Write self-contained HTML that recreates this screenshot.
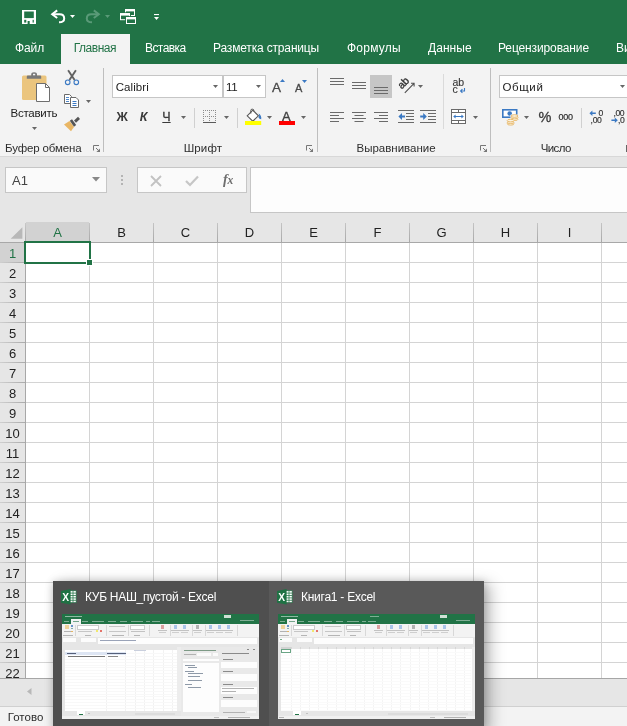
<!DOCTYPE html>
<html><head><meta charset="utf-8">
<style>
*{box-sizing:border-box;margin:0;padding:0}
html,body{width:627px;height:726px;overflow:hidden;background:#fff;font-family:"Liberation Sans",sans-serif;}
.abs{position:absolute}
#root{will-change:transform;position:relative;width:627px;height:726px;overflow:hidden;background:#fff}
#title{left:0;top:0;width:627px;height:64px;background:#217346}
.tab{position:absolute;top:33px;height:31px;line-height:31px;color:#fff;font-size:12.5px;white-space:nowrap}
#ribbon{left:0;top:64px;width:627px;height:92px;background:#f3f3f3}
.glabel{position:absolute;top:141px;font-size:12px;color:#444;white-space:nowrap;letter-spacing:0.3px}
.sep{position:absolute;top:68px;width:1px;height:84px;background:#bebebe}
#fbar{left:0;top:156px;width:627px;height:66px;background:#e6e6e6}
.t{position:absolute;white-space:nowrap;color:#333}
.ch{text-align:center;font-size:13px;line-height:20px}
.rh{text-align:center;font-size:13px;line-height:21px}
</style></head><body><div id="root">
<div id="title" class="abs"></div>
<!-- SECTION: title -->
<div class="abs" style="left:61px;top:34px;width:69px;height:30px;background:#f3f3f3"></div>
<div class="t" style="left:14.70px;top:42px;font-size:12px;line-height:12px;color:#fff;letter-spacing:-0.101px;will-change:transform;">Файл</div>
<div class="t" style="left:73.70px;top:42px;font-size:12px;line-height:12px;color:#217346;letter-spacing:-0.479px;">Главная</div>
<div class="t" style="left:144.70px;top:42px;font-size:12px;line-height:12px;color:#fff;letter-spacing:-0.567px;will-change:transform;">Вставка</div>
<div class="t" style="left:213.40px;top:42px;font-size:12px;line-height:12px;color:#fff;letter-spacing:-0.166px;will-change:transform;">Разметка страницы</div>
<div class="t" style="left:347.40px;top:42px;font-size:12px;line-height:12px;color:#fff;letter-spacing:0.230px;will-change:transform;">Формулы</div>
<div class="t" style="left:427.70px;top:42px;font-size:12px;line-height:12px;color:#fff;letter-spacing:0.049px;will-change:transform;">Данные</div>
<div class="t" style="left:498.40px;top:42px;font-size:12px;line-height:12px;color:#fff;letter-spacing:-0.120px;will-change:transform;">Рецензирование</div>
<div class="t" style="left:616.30px;top:42px;font-size:12px;line-height:12px;color:#fff;letter-spacing:0.000px;will-change:transform;">Ви</div>
<svg class="abs" style="left:22px;top:10px" width="14" height="14" viewBox="0 0 14 14">
<rect x="0" y="0" width="14" height="14" fill="#fff"/>
<rect x="2.2" y="1.5" width="9.6" height="6.6" fill="#217346"/>
<rect x="2.2" y="9.8" width="2.1" height="2.8" fill="#217346"/>
<rect x="5.6" y="11" width="2.1" height="3" fill="#217346"/>
<rect x="10.6" y="9.8" width="1.2" height="2.8" fill="#217346"/></svg>
<svg class="abs" style="left:50px;top:9px" width="16" height="16" viewBox="0 0 16 16"><g fill="none" stroke="#fff" stroke-width="2">
<path d="M7.2 1.4L2.2 5.2L7.2 9"/><path d="M2.6 5.2H9.6Q14.2 5.2 14.2 9.4Q14.2 13.2 9 13.3"/></g></svg>
<svg class="abs" style="left:70px;top:15px" width="5" height="3"><path d="M0 0H5L2.5 3Z" fill="#fff"/></svg>
<svg class="abs" style="left:85px;top:9px" width="16" height="16" viewBox="0 0 16 16"><g transform="translate(16,0) scale(-1,1)" fill="none" stroke="#5a9a78" stroke-width="2">
<path d="M7.2 1.4L2.2 5.2L7.2 9"/><path d="M2.6 5.2H9.6Q14.2 5.2 14.2 9.4Q14.2 13.2 9 13.3"/></g></svg>
<svg class="abs" style="left:105px;top:15px" width="5" height="3"><path d="M0 0H5L2.5 3Z" fill="#5a9a78"/></svg>
<svg class="abs" style="left:119px;top:8px" width="19" height="18" viewBox="0 0 19 18"><rect x="5.1" y="0.09999999999999998" width="11.8" height="8.8" fill="#217346"/><rect x="6.5" y="1.5" width="9" height="6" fill="#217346" stroke="#fff" stroke-width="1"/><rect x="6" y="1" width="10" height="2.4" fill="#fff"/><rect x="0.09999999999999998" y="4.3" width="11.8" height="8.8" fill="#217346"/><rect x="1.5" y="5.7" width="9" height="6" fill="#217346" stroke="#fff" stroke-width="1"/><rect x="1" y="5.2" width="10" height="2.4" fill="#fff"/><rect x="6.1" y="8.1" width="11.8" height="8.8" fill="#217346"/><rect x="7.5" y="9.5" width="9" height="6" fill="#217346" stroke="#fff" stroke-width="1"/><rect x="7" y="9" width="10" height="2.4" fill="#fff"/></svg>
<svg class="abs" style="left:154px;top:14px" width="5" height="7"><rect x="0" y="0" width="5" height="1.1" fill="#fff"/><path d="M0 3H5L2.5 6Z" fill="#fff"/></svg>
<div id="ribbon" class="abs"></div>
<div class="sep" style="left:103px"></div>
<div class="sep" style="left:317px"></div>
<div class="sep" style="left:490px"></div>
<div id="fbar" class="abs"></div>
<div class="abs" style="left:0;top:156px;width:627px;height:1px;background:#d8d8d8"></div>
<!-- SECTION: ribbon -->
<div class="t" style="left:5.10px;top:143px;font-size:11.5px;line-height:11.5px;color:#2e2e2e;letter-spacing:-0.149px;">Буфер обмена</div>
<div class="t" style="left:183.70px;top:143px;font-size:11.5px;line-height:11.5px;color:#2e2e2e;letter-spacing:0.116px;">Шрифт</div>
<div class="t" style="left:356.50px;top:143px;font-size:11.5px;line-height:11.5px;color:#2e2e2e;letter-spacing:-0.005px;">Выравнивание</div>
<div class="t" style="left:540.70px;top:143px;font-size:11.5px;line-height:11.5px;color:#2e2e2e;letter-spacing:-0.618px;">Число</div>
<svg class="abs" style="left:93px;top:145px" width="8" height="8" viewBox="0 0 8 8"><path d="M0.5 5.5V0.5H6" fill="none" stroke="#777" stroke-width="1"/><path d="M3 3L5.5 5.5" fill="none" stroke="#777" stroke-width="1"/><path d="M7 3.4V7H3.4Z" fill="#777"/></svg>
<svg class="abs" style="left:306px;top:145px" width="8" height="8" viewBox="0 0 8 8"><path d="M0.5 5.5V0.5H6" fill="none" stroke="#777" stroke-width="1"/><path d="M3 3L5.5 5.5" fill="none" stroke="#777" stroke-width="1"/><path d="M7 3.4V7H3.4Z" fill="#777"/></svg>
<svg class="abs" style="left:480px;top:145px" width="8" height="8" viewBox="0 0 8 8"><path d="M0.5 5.5V0.5H6" fill="none" stroke="#777" stroke-width="1"/><path d="M3 3L5.5 5.5" fill="none" stroke="#777" stroke-width="1"/><path d="M7 3.4V7H3.4Z" fill="#777"/></svg>
<svg class="abs" style="left:21px;top:71px" width="30" height="32" viewBox="0 0 30 32">
<rect x="1" y="4.5" width="24.5" height="24.5" rx="1.5" fill="#ebc57e"/>
<path d="M5.8 7.8V5.6Q5.8 4.6 6.8 4.6H10.2V3.4Q10.2 1.3 13.1 1.3Q16 1.3 16 3.4V4.6H19.2Q20.2 4.6 20.2 5.6V7.8Z" fill="#787878"/>
<rect x="12" y="2.8" width="2.2" height="1.5" fill="#f3f3f3"/>
<path d="M15.5 12.5H24.5L28.5 16.5V30.5H15.5Z" fill="#fff" stroke="#6e6e6e" stroke-width="1"/>
<path d="M24.5 12.5V16.5H28.5" fill="none" stroke="#6e6e6e" stroke-width="1"/></svg>
<div class="t" style="left:10.50px;top:108px;font-size:11.5px;line-height:11.5px;color:#222;letter-spacing:-0.249px;">Вставить</div>
<svg class="abs" style="left:32px;top:127px" width="5" height="3"><path d="M0 0H5L2.5 3Z" fill="#666"/></svg>
<svg class="abs" style="left:64px;top:69px" width="16" height="17" viewBox="0 0 16 17">
<path d="M4.1 1.3L10.6 11M11.9 1.3L5.4 11" stroke="#626262" stroke-width="1.9" fill="none"/>
<circle cx="3.7" cy="13.3" r="2.3" fill="#f3f3f3" stroke="#3b79c3" stroke-width="1.1"/>
<circle cx="12.3" cy="13.3" r="2.3" fill="#f3f3f3" stroke="#3b79c3" stroke-width="1.1"/></svg>
<svg class="abs" style="left:63px;top:93px" width="17" height="16" viewBox="0 0 17 16">
<path d="M1.5 1.5H6.5L8.5 3.5V10.5H1.5Z" fill="#fff" stroke="#6a6a6a"/>
<path d="M3 4.5H6M3 6.5H6M3 8.5H6" stroke="#3b79c3" stroke-width="0.9"/>
<path d="M7.5 4.5H13L15.5 7V14.5H7.5Z" fill="#fff" stroke="#6a6a6a"/>
<path d="M9.5 8.5H13.5M9.5 10.5H13.5M9.5 12.5H13.5" stroke="#3b79c3" stroke-width="1"/></svg>
<svg class="abs" style="left:86px;top:100px" width="5" height="3"><path d="M0 0H5L2.5 3Z" fill="#666"/></svg>
<svg class="abs" style="left:63px;top:116px" width="18" height="16" viewBox="0 0 18 16">
<path d="M1 8.5L6.5 5L11 11L8 15.2Z" fill="#e9b664"/>
<path d="M6.8 4.8L9 3.2L13.2 9L11 10.8Z" fill="#555"/>
<path d="M11 4.5L15 0.8L17 3L13 6.8Z" fill="#555"/></svg>
<div class="abs" style="left:112px;top:75px;width:111px;height:23px;background:#fff;border:1px solid #c6c6c6"></div>
<div class="abs" style="left:223px;top:75px;width:43px;height:23px;background:#fff;border:1px solid #c6c6c6"></div>
<div class="t" style="left:115.70px;top:82px;font-size:11.5px;line-height:11.5px;color:#222;letter-spacing:0.068px;">Calibri</div>
<div class="t" style="left:226.00px;top:82px;font-size:11.5px;line-height:11.5px;color:#222;letter-spacing:-0.338px;">11</div>
<svg class="abs" style="left:213px;top:85px" width="5" height="3"><path d="M0 0H5L2.5 3Z" fill="#666"/></svg>
<svg class="abs" style="left:256px;top:85px" width="5" height="3"><path d="M0 0H5L2.5 3Z" fill="#666"/></svg>
<div class="t" style="left:272.00px;top:81px;font-size:13.5px;line-height:13.5px;color:#484848;letter-spacing:0.000px;-webkit-text-stroke:0.3px #484848;">A</div>
<svg class="abs" style="left:280px;top:79px" width="5" height="3"><path d="M0 3H5L2.5 0Z" fill="#3b79c3"/></svg>
<div class="t" style="left:295.00px;top:83px;font-size:11px;line-height:11px;color:#484848;letter-spacing:0.000px;-webkit-text-stroke:0.3px #484848;">A</div>
<svg class="abs" style="left:302px;top:79.5px" width="5" height="3"><path d="M0 0H5L2.5 3Z" fill="#3b79c3"/></svg>
<div class="t" style="left:116.60px;top:111px;font-size:12.5px;line-height:12.5px;color:#3a3a3a;letter-spacing:0.000px;font-weight:bold;">Ж</div>
<div class="t" style="left:139.80px;top:111px;font-size:12.5px;line-height:12.5px;color:#3a3a3a;letter-spacing:0.000px;font-weight:bold;font-style:italic;">К</div>
<div class="t" style="left:162.30px;top:111px;font-size:12.5px;line-height:12.5px;color:#3a3a3a;letter-spacing:0.000px;text-decoration:underline;text-underline-offset:1px;-webkit-text-stroke:0.3px #3a3a3a;">Ч</div>
<svg class="abs" style="left:181px;top:116px" width="5" height="3"><path d="M0 0H5L2.5 3Z" fill="#666"/></svg>
<div class="abs" style="left:194px;top:108px;width:1px;height:20px;background:#d0d0d0"></div>
<svg class="abs" style="left:203px;top:110px" width="14" height="14" viewBox="0 0 14 14" shape-rendering="crispEdges">
<g fill="#8c8c8c"><rect x="0" y="0" width="1" height="1"/><rect x="0" y="6" width="1" height="1"/><rect x="0" y="0" width="1" height="1"/><rect x="6" y="0" width="1" height="1"/><rect x="12" y="0" width="1" height="1"/><rect x="2" y="0" width="1" height="1"/><rect x="2" y="6" width="1" height="1"/><rect x="0" y="2" width="1" height="1"/><rect x="6" y="2" width="1" height="1"/><rect x="12" y="2" width="1" height="1"/><rect x="4" y="0" width="1" height="1"/><rect x="4" y="6" width="1" height="1"/><rect x="0" y="4" width="1" height="1"/><rect x="6" y="4" width="1" height="1"/><rect x="12" y="4" width="1" height="1"/><rect x="6" y="0" width="1" height="1"/><rect x="6" y="6" width="1" height="1"/><rect x="0" y="6" width="1" height="1"/><rect x="6" y="6" width="1" height="1"/><rect x="12" y="6" width="1" height="1"/><rect x="8" y="0" width="1" height="1"/><rect x="8" y="6" width="1" height="1"/><rect x="0" y="8" width="1" height="1"/><rect x="6" y="8" width="1" height="1"/><rect x="12" y="8" width="1" height="1"/><rect x="10" y="0" width="1" height="1"/><rect x="10" y="6" width="1" height="1"/><rect x="0" y="10" width="1" height="1"/><rect x="6" y="10" width="1" height="1"/><rect x="12" y="10" width="1" height="1"/><rect x="12" y="0" width="1" height="1"/><rect x="12" y="6" width="1" height="1"/><rect x="0" y="12" width="1" height="1"/><rect x="6" y="12" width="1" height="1"/><rect x="12" y="12" width="1" height="1"/></g><rect x="0" y="12" width="13" height="1" fill="#5a5a5a"/></svg>
<svg class="abs" style="left:224px;top:116px" width="5" height="3"><path d="M0 0H5L2.5 3Z" fill="#666"/></svg>
<div class="abs" style="left:237px;top:108px;width:1px;height:20px;background:#d0d0d0"></div>
<svg class="abs" style="left:245px;top:108px" width="18" height="18" viewBox="0 0 18 18">
<path d="M2.2 7.8L7.8 2.2L13.4 7.8L7.8 13.2Z" fill="#fff" stroke="#555" stroke-width="1.1"/>
<path d="M5.8 5.6V2.4Q5.8 1.2 7 1.2H7.6Q8.8 1.2 8.8 2.4V3.4" fill="none" stroke="#555" stroke-width="1"/>
<path d="M13.6 5.6Q16.8 7.6 16.2 11.2Q14.2 11.2 13.4 9.2L14.2 7.6Z" fill="#3b79c3"/>
<rect x="0" y="13" width="16.2" height="4" fill="#ffff00"/></svg>
<svg class="abs" style="left:267px;top:116px" width="5" height="3"><path d="M0 0H5L2.5 3Z" fill="#666"/></svg>
<div class="t" style="left:282.00px;top:110px;font-size:13px;line-height:13px;color:#404040;letter-spacing:0.000px;-webkit-text-stroke:0.35px #404040;">A</div>
<div class="abs" style="left:279px;top:121px;width:16px;height:4px;background:#f00"></div>
<svg class="abs" style="left:301px;top:116px" width="5" height="3"><path d="M0 0H5L2.5 3Z" fill="#666"/></svg>
<div class="abs" style="left:370px;top:75px;width:22px;height:23px;background:#c6c6c6"></div>
<svg class="abs" style="left:330px;top:78px" width="16" height="9"><rect x="0" y="0" width="14" height="1" fill="#6a6a6a"/><rect x="0" y="3" width="14" height="1" fill="#6a6a6a"/><rect x="0" y="6" width="14" height="1" fill="#6a6a6a"/></svg>
<svg class="abs" style="left:352px;top:82px" width="16" height="9"><rect x="0" y="0" width="14" height="1" fill="#6a6a6a"/><rect x="0" y="3" width="14" height="1" fill="#6a6a6a"/><rect x="0" y="6" width="14" height="1" fill="#6a6a6a"/></svg>
<svg class="abs" style="left:374px;top:87px" width="16" height="9"><rect x="0" y="0" width="14" height="1" fill="#6a6a6a"/><rect x="0" y="3" width="14" height="1" fill="#6a6a6a"/><rect x="0" y="6" width="14" height="1" fill="#6a6a6a"/></svg>
<svg class="abs" style="left:330px;top:112px" width="16" height="12"><rect x="0" y="0" width="14" height="1" fill="#6a6a6a"/><rect x="0" y="3" width="9" height="1" fill="#6a6a6a"/><rect x="0" y="6" width="14" height="1" fill="#6a6a6a"/><rect x="0" y="9" width="9" height="1" fill="#6a6a6a"/></svg>
<svg class="abs" style="left:352px;top:112px" width="16" height="12"><rect x="0" y="0" width="14" height="1" fill="#6a6a6a"/><rect x="2.5" y="3" width="9" height="1" fill="#6a6a6a"/><rect x="0" y="6" width="14" height="1" fill="#6a6a6a"/><rect x="2.5" y="9" width="9" height="1" fill="#6a6a6a"/></svg>
<svg class="abs" style="left:374px;top:112px" width="16" height="12"><rect x="0" y="0" width="14" height="1" fill="#6a6a6a"/><rect x="5" y="3" width="9" height="1" fill="#6a6a6a"/><rect x="0" y="6" width="14" height="1" fill="#6a6a6a"/><rect x="5" y="9" width="9" height="1" fill="#6a6a6a"/></svg>
<svg class="abs" style="left:397px;top:76px" width="19" height="19" viewBox="0 0 19 19">
<text x="0" y="0" transform="translate(4.7,13.6) rotate(-45)" font-family="Liberation Sans, sans-serif" font-size="10.5" fill="#333" stroke="#333" stroke-width="0.35">ab</text>
<path d="M7.8 16.8L16.8 7.6M14 7.3H17.1V10.4" fill="none" stroke="#505050" stroke-width="1.1"/></svg>
<svg class="abs" style="left:418px;top:85px" width="5" height="3"><path d="M0 0H5L2.5 3Z" fill="#666"/></svg>
<svg class="abs" style="left:398px;top:110px" width="17" height="13" viewBox="0 0 17 13">
<path d="M0 0.5H16M8 3.5H16M8 6.5H16M8 9.5H16M0 12.5H16" stroke="#6a6a6a" stroke-width="1"/>
<path d="M0.4 6.5L4 3V5.6H7V7.4H4V10Z" fill="#3b79c3"/></svg>
<svg class="abs" style="left:420px;top:110px" width="17" height="13" viewBox="0 0 17 13">
<path d="M0 0.5H16M8 3.5H16M8 6.5H16M8 9.5H16M0 12.5H16" stroke="#6a6a6a" stroke-width="1"/>
<path d="M6.8 6.5L3.2 3V5.6H0.2V7.4H3.2V10Z" fill="#3b79c3"/></svg>
<div class="abs" style="left:443px;top:74px;width:1px;height:55px;background:#dadada"></div>
<svg class="abs" style="left:452px;top:76px" width="15" height="19" viewBox="0 0 15 19">
<text x="0.4" y="10" font-family="Liberation Sans, sans-serif" font-size="10.5" fill="#3a3a3a" stroke="#3a3a3a" stroke-width="0.15">ab</text>
<text x="0.6" y="17" font-family="Liberation Sans, sans-serif" font-size="10.5" fill="#3a3a3a" stroke="#3a3a3a" stroke-width="0.15">c</text>
<path d="M12.5 12V15H8.6M10.4 13.2L8.6 15L10.4 16.8" fill="none" stroke="#3b79c3" stroke-width="1.1"/></svg>
<svg class="abs" style="left:451px;top:109px" width="16" height="16" viewBox="0 0 16 16">
<rect x="0.5" y="0.5" width="14" height="14" fill="#fff" stroke="#6a6a6a" stroke-width="1"/>
<path d="M0.5 3.5H14.5M0.5 11.5H14.5M7.5 0.5V3.5M7.5 11.5V14.5" stroke="#6a6a6a" stroke-width="1" fill="none"/>
<path d="M3 7.5H12" stroke="#3b79c3" stroke-width="1"/><path d="M2.2 7.5L4.6 5.6V9.4ZM12.8 7.5L10.4 5.6V9.4Z" fill="#3b79c3"/></svg>
<svg class="abs" style="left:473px;top:116px" width="5" height="3"><path d="M0 0H5L2.5 3Z" fill="#666"/></svg>
<div class="abs" style="left:499px;top:75px;width:135px;height:23px;background:#fff;border:1px solid #c6c6c6"></div>
<div class="t" style="left:502.50px;top:82px;font-size:11.5px;line-height:11.5px;color:#222;letter-spacing:0.615px;">Общий</div>
<svg class="abs" style="left:620px;top:85px" width="5" height="3"><path d="M0 0H5L2.5 3Z" fill="#666"/></svg>
<svg class="abs" style="left:501px;top:108px" width="19" height="18" viewBox="0 0 19 18">
<rect x="1" y="1" width="15.5" height="9" fill="#3b79c3"/>
<rect x="2.6" y="2.6" width="12.3" height="5.8" fill="#fff"/>
<circle cx="8.7" cy="5.5" r="2.3" fill="#3b79c3"/>
<rect x="9.5" y="6.6" width="8" height="5.5" fill="#f3f3f3"/>
<g fill="#fbf3e2" stroke="#e7b565" stroke-width="0.9">
<ellipse cx="13.6" cy="11.2" rx="3.4" ry="1.3"/><ellipse cx="13.6" cy="9.6" rx="3.4" ry="1.3"/><ellipse cx="13.6" cy="8" rx="3.4" ry="1.3"/>
<ellipse cx="9.6" cy="15.8" rx="3.4" ry="1.3"/><ellipse cx="9.6" cy="14.2" rx="3.4" ry="1.3"/><ellipse cx="9.6" cy="12.6" rx="3.4" ry="1.3"/></g></svg>
<svg class="abs" style="left:524px;top:116px" width="5" height="3"><path d="M0 0H5L2.5 3Z" fill="#666"/></svg>
<div class="t" style="left:538.60px;top:110px;font-size:14.5px;line-height:14.5px;color:#3a3a3a;letter-spacing:0.000px;-webkit-text-stroke:0.3px #3a3a3a;">%</div>
<div class="t" style="left:558.40px;top:113px;font-size:9px;line-height:9px;color:#2e2e2e;letter-spacing:-0.208px;-webkit-text-stroke:0.2px #2e2e2e;">000</div>
<div class="abs" style="left:581px;top:108px;width:1px;height:20px;background:#d0d0d0"></div>
<svg class="abs" style="left:589px;top:109px" width="16" height="16" viewBox="0 0 16 16">
<text x="9.4" y="6.9" font-family="Liberation Sans, sans-serif" font-size="8.6" fill="#333" stroke="#333" stroke-width="0.15">0</text>
<text x="1.6" y="14.4" font-family="Liberation Sans, sans-serif" font-size="8.6" fill="#333" stroke="#333" stroke-width="0.15" letter-spacing="-0.35">,00</text>
<path d="M0.4 4.2L3.4 1.5V3.5H6.8V4.9H3.4V6.9Z" fill="#3b79c3"/></svg>
<svg class="abs" style="left:611px;top:109px" width="16" height="16" viewBox="0 0 16 16">
<text x="2.4" y="6.9" font-family="Liberation Sans, sans-serif" font-size="8.6" fill="#333" stroke="#333" stroke-width="0.15" letter-spacing="-0.35">,00</text>
<text x="7" y="14.4" font-family="Liberation Sans, sans-serif" font-size="8.6" fill="#333" stroke="#333" stroke-width="0.15" letter-spacing="-0.35">,0</text>
<path d="M6.8 11.2L3.8 8.5V10.5H0.4V11.9H3.8V13.9Z" fill="#3b79c3"/></svg>
<!-- SECTION: formula bar -->
<div class="abs" style="left:5px;top:167px;width:102px;height:26px;background:#fafafa;border:1px solid #c6c6c6"></div>
<div class="t" style="left:12px;top:173px;font-size:13px;color:#444">A1</div>
<svg class="abs" style="left:92px;top:177px" width="9" height="5"><path d="M0 0H8L4 4.5Z" fill="#888"/></svg>
<div class="abs" style="left:121px;top:175px;width:2px;height:2px;background:#b4b4b4"></div>
<div class="abs" style="left:121px;top:179px;width:2px;height:2px;background:#b4b4b4"></div>
<div class="abs" style="left:121px;top:183px;width:2px;height:2px;background:#b4b4b4"></div>
<div class="abs" style="left:137px;top:167px;width:110px;height:26px;background:#fafafa;border:1px solid #c6c6c6"></div>
<svg class="abs" style="left:150px;top:175px" width="12" height="12"><path d="M1 1L11 11M11 1L1 11" stroke="#c2c2c2" stroke-width="1.8" fill="none"/></svg>
<svg class="abs" style="left:185px;top:175px" width="14" height="12"><path d="M1 6L5 10L13 1.5" stroke="#c6c6c6" stroke-width="2.2" fill="none"/></svg>
<div class="t" style="left:223px;top:171px;font-family:'Liberation Serif',serif;font-style:italic;font-size:14px;line-height:18px;color:#6e6e6e;letter-spacing:-0.3px"><b>f</b><b style="font-size:11.5px">x</b></div>
<div class="abs" style="left:250px;top:167px;width:380px;height:46px;background:#fdfdfd;border:1px solid #c6c6c6"></div>
<!-- SECTION: grid -->
<div class="abs" style="left:0;top:222px;width:627px;height:20px;background:#e6e6e6"></div>
<div class="abs" style="left:0;top:242px;width:25px;height:437px;background:#e6e6e6"></div>
<div class="abs" style="left:26px;top:222px;width:63px;height:20px;background:#d2d2d2"></div>
<div class="abs" style="left:0;top:243px;width:25px;height:19px;background:#d2d2d2"></div>
<div class="abs" style="left:0;top:242px;width:627px;height:1px;background:#a8a8a8"></div>
<div class="abs" style="left:25px;top:242px;width:1px;height:437px;background:#a8a8a8"></div>
<svg class="abs" style="left:9px;top:226px" width="14" height="14"><path d="M13.4 1.3 V12.8 H1.7 Z" fill="#b8b8b8"/></svg>
<div class="abs" style="left:25px;top:223px;width:1px;height:19px;background:linear-gradient(#c8c8c8,#a8a8a8)"></div>
<div class="t ch" style="left:26px;top:223px;width:63px;color:#217346">A</div>
<div class="abs" style="left:89px;top:223px;width:1px;height:19px;background:linear-gradient(#c4c4c4,#a8a8a8)"></div>
<div class="abs" style="left:89px;top:243px;width:1px;height:436px;background:#d4d4d4"></div>
<div class="t ch" style="left:90px;top:223px;width:63px;color:#222">B</div>
<div class="abs" style="left:153px;top:223px;width:1px;height:19px;background:linear-gradient(#c4c4c4,#a8a8a8)"></div>
<div class="abs" style="left:153px;top:243px;width:1px;height:436px;background:#d4d4d4"></div>
<div class="t ch" style="left:154px;top:223px;width:63px;color:#222">C</div>
<div class="abs" style="left:217px;top:223px;width:1px;height:19px;background:linear-gradient(#c4c4c4,#a8a8a8)"></div>
<div class="abs" style="left:217px;top:243px;width:1px;height:436px;background:#d4d4d4"></div>
<div class="t ch" style="left:218px;top:223px;width:63px;color:#222">D</div>
<div class="abs" style="left:281px;top:223px;width:1px;height:19px;background:linear-gradient(#c4c4c4,#a8a8a8)"></div>
<div class="abs" style="left:281px;top:243px;width:1px;height:436px;background:#d4d4d4"></div>
<div class="t ch" style="left:282px;top:223px;width:63px;color:#222">E</div>
<div class="abs" style="left:345px;top:223px;width:1px;height:19px;background:linear-gradient(#c4c4c4,#a8a8a8)"></div>
<div class="abs" style="left:345px;top:243px;width:1px;height:436px;background:#d4d4d4"></div>
<div class="t ch" style="left:346px;top:223px;width:63px;color:#222">F</div>
<div class="abs" style="left:409px;top:223px;width:1px;height:19px;background:linear-gradient(#c4c4c4,#a8a8a8)"></div>
<div class="abs" style="left:409px;top:243px;width:1px;height:436px;background:#d4d4d4"></div>
<div class="t ch" style="left:410px;top:223px;width:63px;color:#222">G</div>
<div class="abs" style="left:473px;top:223px;width:1px;height:19px;background:linear-gradient(#c4c4c4,#a8a8a8)"></div>
<div class="abs" style="left:473px;top:243px;width:1px;height:436px;background:#d4d4d4"></div>
<div class="t ch" style="left:474px;top:223px;width:63px;color:#222">H</div>
<div class="abs" style="left:537px;top:223px;width:1px;height:19px;background:linear-gradient(#c4c4c4,#a8a8a8)"></div>
<div class="abs" style="left:537px;top:243px;width:1px;height:436px;background:#d4d4d4"></div>
<div class="t ch" style="left:538px;top:223px;width:63px;color:#222">I</div>
<div class="abs" style="left:601px;top:223px;width:1px;height:19px;background:linear-gradient(#c4c4c4,#a8a8a8)"></div>
<div class="abs" style="left:601px;top:243px;width:1px;height:436px;background:#d4d4d4"></div>
<div class="t rh" style="left:0;top:243px;width:25px;color:#217346">1</div>
<div class="abs" style="left:0;top:262px;width:25px;height:1px;background:linear-gradient(90deg,#cfcfcf,#ababab)"></div>
<div class="abs" style="left:26px;top:262px;width:601px;height:1px;background:#d4d4d4"></div>
<div class="t rh" style="left:0;top:263px;width:25px;color:#222">2</div>
<div class="abs" style="left:0;top:282px;width:25px;height:1px;background:linear-gradient(90deg,#cfcfcf,#ababab)"></div>
<div class="abs" style="left:26px;top:282px;width:601px;height:1px;background:#d4d4d4"></div>
<div class="t rh" style="left:0;top:283px;width:25px;color:#222">3</div>
<div class="abs" style="left:0;top:302px;width:25px;height:1px;background:linear-gradient(90deg,#cfcfcf,#ababab)"></div>
<div class="abs" style="left:26px;top:302px;width:601px;height:1px;background:#d4d4d4"></div>
<div class="t rh" style="left:0;top:303px;width:25px;color:#222">4</div>
<div class="abs" style="left:0;top:322px;width:25px;height:1px;background:linear-gradient(90deg,#cfcfcf,#ababab)"></div>
<div class="abs" style="left:26px;top:322px;width:601px;height:1px;background:#d4d4d4"></div>
<div class="t rh" style="left:0;top:323px;width:25px;color:#222">5</div>
<div class="abs" style="left:0;top:342px;width:25px;height:1px;background:linear-gradient(90deg,#cfcfcf,#ababab)"></div>
<div class="abs" style="left:26px;top:342px;width:601px;height:1px;background:#d4d4d4"></div>
<div class="t rh" style="left:0;top:343px;width:25px;color:#222">6</div>
<div class="abs" style="left:0;top:362px;width:25px;height:1px;background:linear-gradient(90deg,#cfcfcf,#ababab)"></div>
<div class="abs" style="left:26px;top:362px;width:601px;height:1px;background:#d4d4d4"></div>
<div class="t rh" style="left:0;top:363px;width:25px;color:#222">7</div>
<div class="abs" style="left:0;top:382px;width:25px;height:1px;background:linear-gradient(90deg,#cfcfcf,#ababab)"></div>
<div class="abs" style="left:26px;top:382px;width:601px;height:1px;background:#d4d4d4"></div>
<div class="t rh" style="left:0;top:383px;width:25px;color:#222">8</div>
<div class="abs" style="left:0;top:402px;width:25px;height:1px;background:linear-gradient(90deg,#cfcfcf,#ababab)"></div>
<div class="abs" style="left:26px;top:402px;width:601px;height:1px;background:#d4d4d4"></div>
<div class="t rh" style="left:0;top:403px;width:25px;color:#222">9</div>
<div class="abs" style="left:0;top:422px;width:25px;height:1px;background:linear-gradient(90deg,#cfcfcf,#ababab)"></div>
<div class="abs" style="left:26px;top:422px;width:601px;height:1px;background:#d4d4d4"></div>
<div class="t rh" style="left:0;top:423px;width:25px;color:#222">10</div>
<div class="abs" style="left:0;top:442px;width:25px;height:1px;background:linear-gradient(90deg,#cfcfcf,#ababab)"></div>
<div class="abs" style="left:26px;top:442px;width:601px;height:1px;background:#d4d4d4"></div>
<div class="t rh" style="left:0;top:443px;width:25px;color:#222">11</div>
<div class="abs" style="left:0;top:462px;width:25px;height:1px;background:linear-gradient(90deg,#cfcfcf,#ababab)"></div>
<div class="abs" style="left:26px;top:462px;width:601px;height:1px;background:#d4d4d4"></div>
<div class="t rh" style="left:0;top:463px;width:25px;color:#222">12</div>
<div class="abs" style="left:0;top:482px;width:25px;height:1px;background:linear-gradient(90deg,#cfcfcf,#ababab)"></div>
<div class="abs" style="left:26px;top:482px;width:601px;height:1px;background:#d4d4d4"></div>
<div class="t rh" style="left:0;top:483px;width:25px;color:#222">13</div>
<div class="abs" style="left:0;top:502px;width:25px;height:1px;background:linear-gradient(90deg,#cfcfcf,#ababab)"></div>
<div class="abs" style="left:26px;top:502px;width:601px;height:1px;background:#d4d4d4"></div>
<div class="t rh" style="left:0;top:503px;width:25px;color:#222">14</div>
<div class="abs" style="left:0;top:522px;width:25px;height:1px;background:linear-gradient(90deg,#cfcfcf,#ababab)"></div>
<div class="abs" style="left:26px;top:522px;width:601px;height:1px;background:#d4d4d4"></div>
<div class="t rh" style="left:0;top:523px;width:25px;color:#222">15</div>
<div class="abs" style="left:0;top:542px;width:25px;height:1px;background:linear-gradient(90deg,#cfcfcf,#ababab)"></div>
<div class="abs" style="left:26px;top:542px;width:601px;height:1px;background:#d4d4d4"></div>
<div class="t rh" style="left:0;top:543px;width:25px;color:#222">16</div>
<div class="abs" style="left:0;top:562px;width:25px;height:1px;background:linear-gradient(90deg,#cfcfcf,#ababab)"></div>
<div class="abs" style="left:26px;top:562px;width:601px;height:1px;background:#d4d4d4"></div>
<div class="t rh" style="left:0;top:563px;width:25px;color:#222">17</div>
<div class="abs" style="left:0;top:582px;width:25px;height:1px;background:linear-gradient(90deg,#cfcfcf,#ababab)"></div>
<div class="abs" style="left:26px;top:582px;width:601px;height:1px;background:#d4d4d4"></div>
<div class="t rh" style="left:0;top:583px;width:25px;color:#222">18</div>
<div class="abs" style="left:0;top:602px;width:25px;height:1px;background:linear-gradient(90deg,#cfcfcf,#ababab)"></div>
<div class="abs" style="left:26px;top:602px;width:601px;height:1px;background:#d4d4d4"></div>
<div class="t rh" style="left:0;top:603px;width:25px;color:#222">19</div>
<div class="abs" style="left:0;top:622px;width:25px;height:1px;background:linear-gradient(90deg,#cfcfcf,#ababab)"></div>
<div class="abs" style="left:26px;top:622px;width:601px;height:1px;background:#d4d4d4"></div>
<div class="t rh" style="left:0;top:623px;width:25px;color:#222">20</div>
<div class="abs" style="left:0;top:642px;width:25px;height:1px;background:linear-gradient(90deg,#cfcfcf,#ababab)"></div>
<div class="abs" style="left:26px;top:642px;width:601px;height:1px;background:#d4d4d4"></div>
<div class="t rh" style="left:0;top:643px;width:25px;color:#222">21</div>
<div class="abs" style="left:0;top:662px;width:25px;height:1px;background:linear-gradient(90deg,#cfcfcf,#ababab)"></div>
<div class="abs" style="left:26px;top:662px;width:601px;height:1px;background:#d4d4d4"></div>
<div class="t rh" style="left:0;top:663px;width:25px;color:#222">22</div>
<div class="abs" style="left:24px;top:241px;width:67px;height:23px;border:2px solid #217346"></div>
<div class="abs" style="left:86px;top:259px;width:7px;height:7px;background:#217346;border:1px solid #fff"></div>
<div class="abs" style="left:626px;top:145px;width:1px;height:7px;background:#666"></div>
<!-- SECTION: bottom -->
<div class="abs" style="left:0;top:678px;width:627px;height:1px;background:#a6a6a6"></div>
<div class="abs" style="left:0;top:679px;width:627px;height:27px;background:#e6e6e6"></div>
<div class="abs" style="left:0;top:706px;width:627px;height:20px;background:#f3f3f3;border-top:1px solid #d0d0d0"></div>
<svg class="abs" style="left:27px;top:688px" width="5" height="7"><path d="M4.5 0V7L0 3.5Z" fill="#b8b8b8"/></svg>
<div class="t" style="left:7.65px;top:712px;font-size:11.5px;line-height:11.5px;color:#2b2b2b;letter-spacing:0.048px;">Готово</div>
<!-- SECTION: overlay -->
<div class="abs" style="left:53px;top:581px;width:431px;height:150px;background:#555;box-shadow:0 1px 8px rgba(0,0,0,0.22),7px 3px 14px rgba(0,0,0,0.25)"></div>
<div class="abs" style="left:53px;top:581px;width:216px;height:150px;background:#4f4f4f;"></div>
<div class="abs" style="left:269px;top:581px;width:215px;height:150px;background:#595959;"></div>
<svg class="abs" style="left:61px;top:589px" width="16" height="16" viewBox="0 0 16 16">
<rect x="8.6" y="1.7" width="6.6" height="12" fill="#fff" stroke="#1e6b41" stroke-width="0.7"/>
<path d="M9 4.1H15M9 6.5H15M9 8.9H15M9 11.3H15M12 1.7V13.7" stroke="#2a7a4d" stroke-width="0.8"/>
<path d="M0 1.9L9.6 0V15.6L0 13.7Z" fill="#1f7244"/>
<text x="1.2" y="11.9" font-family="Liberation Sans, sans-serif" font-weight="bold" font-size="11.5" fill="#fff" textLength="6.8" lengthAdjust="spacingAndGlyphs">X</text></svg>
<svg class="abs" style="left:277px;top:589px" width="16" height="16" viewBox="0 0 16 16">
<rect x="8.6" y="1.7" width="6.6" height="12" fill="#fff" stroke="#1e6b41" stroke-width="0.7"/>
<path d="M9 4.1H15M9 6.5H15M9 8.9H15M9 11.3H15M12 1.7V13.7" stroke="#2a7a4d" stroke-width="0.8"/>
<path d="M0 1.9L9.6 0V15.6L0 13.7Z" fill="#1f7244"/>
<text x="1.2" y="11.9" font-family="Liberation Sans, sans-serif" font-weight="bold" font-size="11.5" fill="#fff" textLength="6.8" lengthAdjust="spacingAndGlyphs">X</text></svg>
<div class="t" style="left:85.20px;top:591px;font-size:12px;line-height:12px;color:#fff;letter-spacing:-0.291px;will-change:transform;">КУБ НАШ_пустой - Excel</div>
<div class="t" style="left:301.20px;top:591px;font-size:12px;line-height:12px;color:#fff;letter-spacing:-0.253px;will-change:transform;">Книга1 - Excel</div>
<div class="abs" style="left:62px;top:614px;width:197px;height:105px;background:#fff;"></div>
<div class="abs" style="left:62px;top:614px;width:197px;height:9.5px;background:#217346;"></div>
<div class="abs" style="left:71px;top:619px;width:9.5px;height:4.5px;background:#f3f3f3;"></div>
<div class="abs" style="left:64px;top:620.5px;width:5px;height:1.2px;background:rgba(255,255,255,0.42);"></div>
<div class="abs" style="left:82px;top:620.5px;width:6px;height:1.2px;background:rgba(255,255,255,0.42);"></div>
<div class="abs" style="left:92px;top:620.5px;width:12px;height:1.2px;background:rgba(255,255,255,0.42);"></div>
<div class="abs" style="left:108px;top:620.5px;width:8px;height:1.2px;background:rgba(255,255,255,0.42);"></div>
<div class="abs" style="left:120px;top:620.5px;width:7px;height:1.2px;background:rgba(255,255,255,0.42);"></div>
<div class="abs" style="left:131px;top:620.5px;width:12px;height:1.2px;background:rgba(255,255,255,0.42);"></div>
<div class="abs" style="left:146px;top:620.5px;width:4px;height:1.2px;background:rgba(255,255,255,0.42);"></div>
<div class="abs" style="left:152px;top:620.5px;width:8px;height:1.2px;background:rgba(255,255,255,0.42);"></div>
<div class="abs" style="left:72.5px;top:620.8px;width:6.5px;height:1.2px;background:rgba(33,115,70,0.6);"></div>
<div class="abs" style="left:65px;top:615.8px;width:17px;height:1.6px;background:rgba(255,255,255,0.5);"></div>
<div class="abs" style="left:62px;top:623.5px;width:197px;height:13.2px;background:#f3f3f3;"></div>
<div class="abs" style="left:62px;top:636.7px;width:197px;height:10px;background:#e6e6e6;"></div>
<div class="abs" style="left:62.8px;top:637.8px;width:13.5px;height:4.2px;background:#fcfcfc;"></div>
<div class="abs" style="left:81px;top:637.8px;width:15px;height:4.2px;background:#fcfcfc;"></div>
<div class="abs" style="left:65.2px;top:625px;width:3.4px;height:4px;background:#efd39c;"></div>
<div class="abs" style="left:63.5px;top:631px;width:8px;height:1px;background:#b2b2b2;"></div>
<div class="abs" style="left:71px;top:625px;width:1.5px;height:1.5px;background:#6a93c9;"></div>
<div class="abs" style="left:71px;top:627.8px;width:1.5px;height:1.5px;background:#8aa;"></div>
<div class="abs" style="left:71px;top:630.5px;width:1.5px;height:1.5px;background:#e3b565;"></div>
<div class="abs" style="left:78px;top:625.5px;width:20px;height:3px;background:#fff;outline:0.5px solid #ccc"></div>
<div class="abs" style="left:78px;top:630.5px;width:14px;height:1.2px;background:#c6c6c6;"></div>
<div class="abs" style="left:95.8px;top:630px;width:2.2px;height:2.2px;background:#f1e96f;"></div>
<div class="abs" style="left:99.6px;top:630px;width:2.2px;height:2.2px;background:#e4736a;"></div>
<div class="abs" style="left:109px;top:626px;width:16px;height:1.2px;background:#c6c6c6;"></div>
<div class="abs" style="left:109px;top:630.5px;width:17px;height:1.2px;background:#c6c6c6;"></div>
<div class="abs" style="left:131px;top:626px;width:13px;height:2.6px;background:#fff;outline:0.5px solid #ccc"></div>
<div class="abs" style="left:131px;top:630.5px;width:14px;height:1.5px;background:#c2c2c2;"></div>
<div class="abs" style="left:75px;top:624.5px;width:0.6px;height:11px;background:#d8d8d8;"></div>
<div class="abs" style="left:106px;top:624.5px;width:0.6px;height:11px;background:#d8d8d8;"></div>
<div class="abs" style="left:128px;top:624.5px;width:0.6px;height:11px;background:#d8d8d8;"></div>
<div class="abs" style="left:149px;top:624.5px;width:0.6px;height:11px;background:#d8d8d8;"></div>
<div class="abs" style="left:63px;top:634.5px;width:10px;height:1px;background:#b5b5b5;"></div>
<div class="abs" style="left:85px;top:634.5px;width:6px;height:1px;background:#b5b5b5;"></div>
<div class="abs" style="left:112px;top:634.5px;width:12px;height:1px;background:#b5b5b5;"></div>
<div class="abs" style="left:134px;top:634.5px;width:6px;height:1px;background:#b5b5b5;"></div>
<div class="abs" style="left:98px;top:638px;width:158.5px;height:6px;background:#fdfdfd;"></div>
<div class="abs" style="left:100px;top:639.6px;width:36px;height:1.2px;background:#9aa3b8;"></div>
<div class="abs" style="left:161px;top:624.8px;width:3px;height:4px;background:#dba0a0;"></div>
<div class="abs" style="left:158px;top:629.8px;width:9px;height:1px;background:#c2c2c2;"></div>
<div class="abs" style="left:159px;top:631.6px;width:7px;height:1px;background:#cfcfcf;"></div>
<div class="abs" style="left:174px;top:624.8px;width:3px;height:4px;background:#a9c4e8;"></div>
<div class="abs" style="left:171px;top:629.8px;width:9px;height:1px;background:#c2c2c2;"></div>
<div class="abs" style="left:172px;top:631.6px;width:7px;height:1px;background:#cfcfcf;"></div>
<div class="abs" style="left:183px;top:624.8px;width:3px;height:4px;background:#a9c4e8;"></div>
<div class="abs" style="left:180px;top:629.8px;width:9px;height:1px;background:#c2c2c2;"></div>
<div class="abs" style="left:181px;top:631.6px;width:7px;height:1px;background:#cfcfcf;"></div>
<div class="abs" style="left:196px;top:624.8px;width:3px;height:4px;background:#b2b2b2;"></div>
<div class="abs" style="left:193px;top:629.8px;width:9px;height:1px;background:#c2c2c2;"></div>
<div class="abs" style="left:194px;top:631.6px;width:7px;height:1px;background:#cfcfcf;"></div>
<div class="abs" style="left:209px;top:624.8px;width:3px;height:4px;background:#a9c4e8;"></div>
<div class="abs" style="left:206px;top:629.8px;width:9px;height:1px;background:#c2c2c2;"></div>
<div class="abs" style="left:207px;top:631.6px;width:7px;height:1px;background:#cfcfcf;"></div>
<div class="abs" style="left:218px;top:624.8px;width:3px;height:4px;background:#a9c4e8;"></div>
<div class="abs" style="left:215px;top:629.8px;width:9px;height:1px;background:#c2c2c2;"></div>
<div class="abs" style="left:216px;top:631.6px;width:7px;height:1px;background:#cfcfcf;"></div>
<div class="abs" style="left:227px;top:624.8px;width:3px;height:4px;background:#a9c4e8;"></div>
<div class="abs" style="left:224px;top:629.8px;width:9px;height:1px;background:#c2c2c2;"></div>
<div class="abs" style="left:225px;top:631.6px;width:7px;height:1px;background:#cfcfcf;"></div>
<div class="abs" style="left:170px;top:624.5px;width:0.6px;height:11px;background:#d8d8d8;"></div>
<div class="abs" style="left:192px;top:624.5px;width:0.6px;height:11px;background:#d8d8d8;"></div>
<div class="abs" style="left:205px;top:624.5px;width:0.6px;height:11px;background:#d8d8d8;"></div>
<div class="abs" style="left:237px;top:624.5px;width:0.6px;height:11px;background:#d8d8d8;"></div>
<div class="abs" style="left:224px;top:615.2px;width:6.5px;height:2.4px;background:#cfe0d5;"></div>
<div class="abs" style="left:240px;top:620.3px;width:14px;height:1.1px;background:rgba(255,255,255,0.42);"></div>
<div class="abs" style="left:62px;top:646.7px;width:119px;height:3.3px;background:#e6e6e6;"></div>
<div class="abs" style="left:62px;top:650px;width:3.2px;height:61px;background:#e6e6e6;"></div>
<div class="abs" style="left:106px;top:650px;width:0.5px;height:61px;background:#f2f2f2;"></div>
<div class="abs" style="left:125px;top:650px;width:0.5px;height:61px;background:#f2f2f2;"></div>
<div class="abs" style="left:135px;top:650px;width:0.5px;height:61px;background:#f2f2f2;"></div>
<div class="abs" style="left:144px;top:650px;width:0.5px;height:61px;background:#f2f2f2;"></div>
<div class="abs" style="left:153px;top:650px;width:0.5px;height:61px;background:#f2f2f2;"></div>
<div class="abs" style="left:163px;top:650px;width:0.5px;height:61px;background:#f2f2f2;"></div>
<div class="abs" style="left:172px;top:650px;width:0.5px;height:61px;background:#f2f2f2;"></div>
<div class="abs" style="left:65.2px;top:652.9px;width:112px;height:0.4px;background:#f8f8f8;"></div>
<div class="abs" style="left:65.2px;top:655.8px;width:112px;height:0.4px;background:#f8f8f8;"></div>
<div class="abs" style="left:65.2px;top:658.7px;width:112px;height:0.4px;background:#f8f8f8;"></div>
<div class="abs" style="left:65.2px;top:661.6px;width:112px;height:0.4px;background:#f8f8f8;"></div>
<div class="abs" style="left:65.2px;top:664.5px;width:112px;height:0.4px;background:#f8f8f8;"></div>
<div class="abs" style="left:65.2px;top:667.4px;width:112px;height:0.4px;background:#f8f8f8;"></div>
<div class="abs" style="left:65.2px;top:670.3px;width:112px;height:0.4px;background:#f8f8f8;"></div>
<div class="abs" style="left:65.2px;top:673.2px;width:112px;height:0.4px;background:#f8f8f8;"></div>
<div class="abs" style="left:65.2px;top:676.1px;width:112px;height:0.4px;background:#f8f8f8;"></div>
<div class="abs" style="left:65.2px;top:679.0px;width:112px;height:0.4px;background:#f8f8f8;"></div>
<div class="abs" style="left:65.2px;top:681.9px;width:112px;height:0.4px;background:#f8f8f8;"></div>
<div class="abs" style="left:65.2px;top:684.8px;width:112px;height:0.4px;background:#f8f8f8;"></div>
<div class="abs" style="left:65.2px;top:687.7px;width:112px;height:0.4px;background:#f8f8f8;"></div>
<div class="abs" style="left:65.2px;top:690.6px;width:112px;height:0.4px;background:#f8f8f8;"></div>
<div class="abs" style="left:65.2px;top:693.5px;width:112px;height:0.4px;background:#f8f8f8;"></div>
<div class="abs" style="left:65.2px;top:696.4px;width:112px;height:0.4px;background:#f8f8f8;"></div>
<div class="abs" style="left:65.2px;top:699.3px;width:112px;height:0.4px;background:#f8f8f8;"></div>
<div class="abs" style="left:65.2px;top:702.2px;width:112px;height:0.4px;background:#f8f8f8;"></div>
<div class="abs" style="left:65.2px;top:705.1px;width:112px;height:0.4px;background:#f8f8f8;"></div>
<div class="abs" style="left:65.2px;top:708.0px;width:112px;height:0.4px;background:#f8f8f8;"></div>
<div class="abs" style="left:65.4px;top:651.6px;width:61px;height:3.2px;background:#dde5f3;"></div>
<div class="abs" style="left:66.5px;top:652.6px;width:9px;height:1.2px;background:#55607a;"></div>
<div class="abs" style="left:107px;top:652.6px;width:19px;height:1.3px;background:#55607a;"></div>
<div class="abs" style="left:67.5px;top:655.6px;width:37px;height:1.3px;background:#777;"></div>
<div class="abs" style="left:108px;top:655.6px;width:10px;height:1.2px;background:#888;"></div>
<div class="abs" style="left:134px;top:649.5px;width:12px;height:1.2px;background:#c9cfdd;"></div>
<div class="abs" style="left:177px;top:647px;width:3.5px;height:64px;background:#ededed;"></div>
<div class="abs" style="left:62px;top:711px;width:119px;height:5.2px;background:#e6e6e6;"></div>
<div class="abs" style="left:76.5px;top:711px;width:8.5px;height:4px;background:#fff;"></div>
<div class="abs" style="left:78.5px;top:713.6px;width:4.5px;height:1px;background:#217346;"></div>
<div class="abs" style="left:88px;top:712.6px;width:1.6px;height:1.6px;background:#c2c2c2;"></div>
<div class="abs" style="left:135px;top:712.6px;width:40px;height:2px;background:#dcdcdc;"></div>
<div class="abs" style="left:62px;top:716.2px;width:197px;height:2.8px;background:#f0f0f0;"></div>
<div class="abs" style="left:214px;top:716.8px;width:5px;height:1.6px;background:#bdbdbd;"></div>
<div class="abs" style="left:228px;top:717.2px;width:22px;height:0.8px;background:#b2b2b2;"></div>
<div class="abs" style="left:181px;top:646.7px;width:78px;height:69.5px;background:#e9e9e9;"></div>
<div class="abs" style="left:183.5px;top:649.5px;width:32px;height:1.5px;background:#7d9a86;"></div>
<div class="abs" style="left:183.5px;top:654px;width:12px;height:1.2px;background:#b2b2b2;"></div>
<div class="abs" style="left:197px;top:653px;width:14px;height:2.6px;background:#fbfbfb;"></div>
<div class="abs" style="left:213px;top:653px;width:5px;height:2.6px;background:#fbfbfb;"></div>
<div class="abs" style="left:183.3px;top:658.6px;width:35.5px;height:2.8px;background:#fdfdfd;"></div>
<div class="abs" style="left:183.3px;top:663.2px;width:35.5px;height:49px;background:#fdfdfd;"></div>
<div class="abs" style="left:185.3px;top:664.5px;width:10px;height:1.1px;background:#8f9aa8;"></div>
<div class="abs" style="left:188.3px;top:666.8px;width:9px;height:1.1px;background:#8f9aa8;"></div>
<div class="abs" style="left:185.3px;top:671px;width:9px;height:1.1px;background:#8f9aa8;"></div>
<div class="abs" style="left:188.3px;top:673.3px;width:15px;height:1.1px;background:#8f9aa8;"></div>
<div class="abs" style="left:188.3px;top:676.3px;width:12px;height:1.1px;background:#8f9aa8;"></div>
<div class="abs" style="left:188.3px;top:679.5px;width:14px;height:1.1px;background:#8f9aa8;"></div>
<div class="abs" style="left:185.3px;top:684.3px;width:7px;height:1.1px;background:#8f9aa8;"></div>
<div class="abs" style="left:188.3px;top:686.6px;width:13px;height:1.1px;background:#8f9aa8;"></div>
<div class="abs" style="left:221.5px;top:653px;width:27px;height:1.1px;background:#8a8a8a;"></div>
<div class="abs" style="left:221px;top:661.5px;width:35.5px;height:6.9px;background:#fdfdfd;"></div>
<div class="abs" style="left:222.5px;top:658.5px;width:10px;height:1.2px;background:#8a8a8a;"></div>
<div class="abs" style="left:221px;top:674.3px;width:35.5px;height:6.9px;background:#fdfdfd;"></div>
<div class="abs" style="left:222.5px;top:671.3px;width:10px;height:1.2px;background:#8a8a8a;"></div>
<div class="abs" style="left:221px;top:686.8px;width:35.5px;height:6.9px;background:#fdfdfd;"></div>
<div class="abs" style="left:222.5px;top:683.8px;width:10px;height:1.2px;background:#8a8a8a;"></div>
<div class="abs" style="left:221px;top:699.8px;width:35.5px;height:6.9px;background:#fdfdfd;"></div>
<div class="abs" style="left:222.5px;top:696.8px;width:10px;height:1.2px;background:#8a8a8a;"></div>
<div class="abs" style="left:222px;top:688.3px;width:32px;height:0.9px;background:#b2b2b2;"></div>
<div class="abs" style="left:222px;top:691.2px;width:14px;height:0.9px;background:#b2b2b2;"></div>
<div class="abs" style="left:223px;top:711.6px;width:22px;height:1.1px;background:#b2b2b2;"></div>
<div class="abs" style="left:247px;top:710.6px;width:9px;height:2.6px;background:#f6f6f6;"></div>
<div class="abs" style="left:247px;top:649.3px;width:1.6px;height:1.2px;background:#888;"></div>
<div class="abs" style="left:253px;top:649.3px;width:1.6px;height:1.2px;background:#888;"></div>
<div class="abs" style="left:278px;top:614px;width:197px;height:105px;background:#fff;"></div>
<div class="abs" style="left:278px;top:614px;width:197px;height:9.5px;background:#217346;"></div>
<div class="abs" style="left:287px;top:619px;width:9.5px;height:4.5px;background:#f3f3f3;"></div>
<div class="abs" style="left:280px;top:620.5px;width:5px;height:1.2px;background:rgba(255,255,255,0.42);"></div>
<div class="abs" style="left:298px;top:620.5px;width:6px;height:1.2px;background:rgba(255,255,255,0.42);"></div>
<div class="abs" style="left:308px;top:620.5px;width:12px;height:1.2px;background:rgba(255,255,255,0.42);"></div>
<div class="abs" style="left:324px;top:620.5px;width:8px;height:1.2px;background:rgba(255,255,255,0.42);"></div>
<div class="abs" style="left:336px;top:620.5px;width:7px;height:1.2px;background:rgba(255,255,255,0.42);"></div>
<div class="abs" style="left:347px;top:620.5px;width:12px;height:1.2px;background:rgba(255,255,255,0.42);"></div>
<div class="abs" style="left:362px;top:620.5px;width:4px;height:1.2px;background:rgba(255,255,255,0.42);"></div>
<div class="abs" style="left:368px;top:620.5px;width:8px;height:1.2px;background:rgba(255,255,255,0.42);"></div>
<div class="abs" style="left:288.5px;top:620.8px;width:6.5px;height:1.2px;background:rgba(33,115,70,0.6);"></div>
<div class="abs" style="left:281px;top:615.8px;width:17px;height:1.6px;background:rgba(255,255,255,0.5);"></div>
<div class="abs" style="left:278px;top:623.5px;width:197px;height:13.2px;background:#f3f3f3;"></div>
<div class="abs" style="left:278px;top:636.7px;width:197px;height:10px;background:#e6e6e6;"></div>
<div class="abs" style="left:278.8px;top:637.8px;width:13.5px;height:4.2px;background:#fcfcfc;"></div>
<div class="abs" style="left:297px;top:637.8px;width:15px;height:4.2px;background:#fcfcfc;"></div>
<div class="abs" style="left:281.2px;top:625px;width:3.4px;height:4px;background:#efd39c;"></div>
<div class="abs" style="left:279.5px;top:631px;width:8px;height:1px;background:#b2b2b2;"></div>
<div class="abs" style="left:287px;top:625px;width:1.5px;height:1.5px;background:#6a93c9;"></div>
<div class="abs" style="left:287px;top:627.8px;width:1.5px;height:1.5px;background:#8aa;"></div>
<div class="abs" style="left:287px;top:630.5px;width:1.5px;height:1.5px;background:#e3b565;"></div>
<div class="abs" style="left:294px;top:625.5px;width:20px;height:3px;background:#fff;outline:0.5px solid #ccc"></div>
<div class="abs" style="left:294px;top:630.5px;width:14px;height:1.2px;background:#c6c6c6;"></div>
<div class="abs" style="left:311.8px;top:630px;width:2.2px;height:2.2px;background:#f1e96f;"></div>
<div class="abs" style="left:315.6px;top:630px;width:2.2px;height:2.2px;background:#e4736a;"></div>
<div class="abs" style="left:325px;top:626px;width:16px;height:1.2px;background:#c6c6c6;"></div>
<div class="abs" style="left:325px;top:630.5px;width:17px;height:1.2px;background:#c6c6c6;"></div>
<div class="abs" style="left:347px;top:626px;width:13px;height:2.6px;background:#fff;outline:0.5px solid #ccc"></div>
<div class="abs" style="left:347px;top:630.5px;width:14px;height:1.5px;background:#c2c2c2;"></div>
<div class="abs" style="left:291px;top:624.5px;width:0.6px;height:11px;background:#d8d8d8;"></div>
<div class="abs" style="left:322px;top:624.5px;width:0.6px;height:11px;background:#d8d8d8;"></div>
<div class="abs" style="left:344px;top:624.5px;width:0.6px;height:11px;background:#d8d8d8;"></div>
<div class="abs" style="left:365px;top:624.5px;width:0.6px;height:11px;background:#d8d8d8;"></div>
<div class="abs" style="left:279px;top:634.5px;width:10px;height:1px;background:#b5b5b5;"></div>
<div class="abs" style="left:301px;top:634.5px;width:6px;height:1px;background:#b5b5b5;"></div>
<div class="abs" style="left:328px;top:634.5px;width:12px;height:1px;background:#b5b5b5;"></div>
<div class="abs" style="left:350px;top:634.5px;width:6px;height:1px;background:#b5b5b5;"></div>
<div class="abs" style="left:314px;top:637.8px;width:158.5px;height:6px;background:#fdfdfd;"></div>
<div class="abs" style="left:280px;top:639.2px;width:2px;height:1.2px;background:#7a8;"></div>
<div class="abs" style="left:377px;top:624.8px;width:3px;height:4px;background:#dba0a0;"></div>
<div class="abs" style="left:374px;top:629.8px;width:9px;height:1px;background:#c2c2c2;"></div>
<div class="abs" style="left:375px;top:631.6px;width:7px;height:1px;background:#cfcfcf;"></div>
<div class="abs" style="left:390px;top:624.8px;width:3px;height:4px;background:#a9c4e8;"></div>
<div class="abs" style="left:387px;top:629.8px;width:9px;height:1px;background:#c2c2c2;"></div>
<div class="abs" style="left:388px;top:631.6px;width:7px;height:1px;background:#cfcfcf;"></div>
<div class="abs" style="left:399px;top:624.8px;width:3px;height:4px;background:#a9c4e8;"></div>
<div class="abs" style="left:396px;top:629.8px;width:9px;height:1px;background:#c2c2c2;"></div>
<div class="abs" style="left:397px;top:631.6px;width:7px;height:1px;background:#cfcfcf;"></div>
<div class="abs" style="left:412px;top:624.8px;width:3px;height:4px;background:#b2b2b2;"></div>
<div class="abs" style="left:409px;top:629.8px;width:9px;height:1px;background:#c2c2c2;"></div>
<div class="abs" style="left:410px;top:631.6px;width:7px;height:1px;background:#cfcfcf;"></div>
<div class="abs" style="left:425px;top:624.8px;width:3px;height:4px;background:#a9c4e8;"></div>
<div class="abs" style="left:422px;top:629.8px;width:9px;height:1px;background:#c2c2c2;"></div>
<div class="abs" style="left:423px;top:631.6px;width:7px;height:1px;background:#cfcfcf;"></div>
<div class="abs" style="left:434px;top:624.8px;width:3px;height:4px;background:#a9c4e8;"></div>
<div class="abs" style="left:431px;top:629.8px;width:9px;height:1px;background:#c2c2c2;"></div>
<div class="abs" style="left:432px;top:631.6px;width:7px;height:1px;background:#cfcfcf;"></div>
<div class="abs" style="left:443px;top:624.8px;width:3px;height:4px;background:#a9c4e8;"></div>
<div class="abs" style="left:440px;top:629.8px;width:9px;height:1px;background:#c2c2c2;"></div>
<div class="abs" style="left:441px;top:631.6px;width:7px;height:1px;background:#cfcfcf;"></div>
<div class="abs" style="left:386px;top:624.5px;width:0.6px;height:11px;background:#d8d8d8;"></div>
<div class="abs" style="left:408px;top:624.5px;width:0.6px;height:11px;background:#d8d8d8;"></div>
<div class="abs" style="left:421px;top:624.5px;width:0.6px;height:11px;background:#d8d8d8;"></div>
<div class="abs" style="left:453px;top:624.5px;width:0.6px;height:11px;background:#d8d8d8;"></div>
<div class="abs" style="left:440px;top:615.2px;width:6.5px;height:2.4px;background:#cfe0d5;"></div>
<div class="abs" style="left:456px;top:620.3px;width:14px;height:1.1px;background:rgba(255,255,255,0.42);"></div>
<div class="abs" style="left:370px;top:616px;width:9px;height:1.1px;background:rgba(255,255,255,0.42);"></div>
<div class="abs" style="left:278px;top:646.7px;width:197px;height:2.6px;background:#e6e6e6;"></div>
<div class="abs" style="left:281.4px;top:646.7px;width:9.4px;height:2.6px;background:#d2d2d2;"></div>
<div class="abs" style="left:278px;top:649.3px;width:3.2px;height:62px;background:#e6e6e6;"></div>
<div class="abs" style="left:290.54999999999995px;top:649.4px;width:0.5px;height:61.6px;background:#f4f4f4;"></div>
<div class="abs" style="left:290.54999999999995px;top:646.9px;width:0.5px;height:2.4px;background:#d6d6d6;"></div>
<div class="abs" style="left:299.7px;top:649.4px;width:0.5px;height:61.6px;background:#f4f4f4;"></div>
<div class="abs" style="left:299.7px;top:646.9px;width:0.5px;height:2.4px;background:#d6d6d6;"></div>
<div class="abs" style="left:308.84999999999997px;top:649.4px;width:0.5px;height:61.6px;background:#f4f4f4;"></div>
<div class="abs" style="left:308.84999999999997px;top:646.9px;width:0.5px;height:2.4px;background:#d6d6d6;"></div>
<div class="abs" style="left:318.0px;top:649.4px;width:0.5px;height:61.6px;background:#f4f4f4;"></div>
<div class="abs" style="left:318.0px;top:646.9px;width:0.5px;height:2.4px;background:#d6d6d6;"></div>
<div class="abs" style="left:327.15px;top:649.4px;width:0.5px;height:61.6px;background:#f4f4f4;"></div>
<div class="abs" style="left:327.15px;top:646.9px;width:0.5px;height:2.4px;background:#d6d6d6;"></div>
<div class="abs" style="left:336.29999999999995px;top:649.4px;width:0.5px;height:61.6px;background:#f4f4f4;"></div>
<div class="abs" style="left:336.29999999999995px;top:646.9px;width:0.5px;height:2.4px;background:#d6d6d6;"></div>
<div class="abs" style="left:345.45px;top:649.4px;width:0.5px;height:61.6px;background:#f4f4f4;"></div>
<div class="abs" style="left:345.45px;top:646.9px;width:0.5px;height:2.4px;background:#d6d6d6;"></div>
<div class="abs" style="left:354.59999999999997px;top:649.4px;width:0.5px;height:61.6px;background:#f4f4f4;"></div>
<div class="abs" style="left:354.59999999999997px;top:646.9px;width:0.5px;height:2.4px;background:#d6d6d6;"></div>
<div class="abs" style="left:363.75px;top:649.4px;width:0.5px;height:61.6px;background:#f4f4f4;"></div>
<div class="abs" style="left:363.75px;top:646.9px;width:0.5px;height:2.4px;background:#d6d6d6;"></div>
<div class="abs" style="left:372.9px;top:649.4px;width:0.5px;height:61.6px;background:#f4f4f4;"></div>
<div class="abs" style="left:372.9px;top:646.9px;width:0.5px;height:2.4px;background:#d6d6d6;"></div>
<div class="abs" style="left:382.04999999999995px;top:649.4px;width:0.5px;height:61.6px;background:#f4f4f4;"></div>
<div class="abs" style="left:382.04999999999995px;top:646.9px;width:0.5px;height:2.4px;background:#d6d6d6;"></div>
<div class="abs" style="left:391.2px;top:649.4px;width:0.5px;height:61.6px;background:#f4f4f4;"></div>
<div class="abs" style="left:391.2px;top:646.9px;width:0.5px;height:2.4px;background:#d6d6d6;"></div>
<div class="abs" style="left:400.34999999999997px;top:649.4px;width:0.5px;height:61.6px;background:#f4f4f4;"></div>
<div class="abs" style="left:400.34999999999997px;top:646.9px;width:0.5px;height:2.4px;background:#d6d6d6;"></div>
<div class="abs" style="left:409.5px;top:649.4px;width:0.5px;height:61.6px;background:#f4f4f4;"></div>
<div class="abs" style="left:409.5px;top:646.9px;width:0.5px;height:2.4px;background:#d6d6d6;"></div>
<div class="abs" style="left:418.65px;top:649.4px;width:0.5px;height:61.6px;background:#f4f4f4;"></div>
<div class="abs" style="left:418.65px;top:646.9px;width:0.5px;height:2.4px;background:#d6d6d6;"></div>
<div class="abs" style="left:427.79999999999995px;top:649.4px;width:0.5px;height:61.6px;background:#f4f4f4;"></div>
<div class="abs" style="left:427.79999999999995px;top:646.9px;width:0.5px;height:2.4px;background:#d6d6d6;"></div>
<div class="abs" style="left:436.95px;top:649.4px;width:0.5px;height:61.6px;background:#f4f4f4;"></div>
<div class="abs" style="left:436.95px;top:646.9px;width:0.5px;height:2.4px;background:#d6d6d6;"></div>
<div class="abs" style="left:446.1px;top:649.4px;width:0.5px;height:61.6px;background:#f4f4f4;"></div>
<div class="abs" style="left:446.1px;top:646.9px;width:0.5px;height:2.4px;background:#d6d6d6;"></div>
<div class="abs" style="left:455.25px;top:649.4px;width:0.5px;height:61.6px;background:#f4f4f4;"></div>
<div class="abs" style="left:455.25px;top:646.9px;width:0.5px;height:2.4px;background:#d6d6d6;"></div>
<div class="abs" style="left:464.4px;top:649.4px;width:0.5px;height:61.6px;background:#f4f4f4;"></div>
<div class="abs" style="left:464.4px;top:646.9px;width:0.5px;height:2.4px;background:#d6d6d6;"></div>
<div class="abs" style="left:281.2px;top:652.1999999999999px;width:190px;height:0.4px;background:#fafafa;"></div>
<div class="abs" style="left:281.2px;top:655.0999999999999px;width:190px;height:0.4px;background:#fafafa;"></div>
<div class="abs" style="left:281.2px;top:658.0px;width:190px;height:0.4px;background:#fafafa;"></div>
<div class="abs" style="left:281.2px;top:660.9px;width:190px;height:0.4px;background:#fafafa;"></div>
<div class="abs" style="left:281.2px;top:663.8px;width:190px;height:0.4px;background:#fafafa;"></div>
<div class="abs" style="left:281.2px;top:666.6999999999999px;width:190px;height:0.4px;background:#fafafa;"></div>
<div class="abs" style="left:281.2px;top:669.5999999999999px;width:190px;height:0.4px;background:#fafafa;"></div>
<div class="abs" style="left:281.2px;top:672.5px;width:190px;height:0.4px;background:#fafafa;"></div>
<div class="abs" style="left:281.2px;top:675.4px;width:190px;height:0.4px;background:#fafafa;"></div>
<div class="abs" style="left:281.2px;top:678.3px;width:190px;height:0.4px;background:#fafafa;"></div>
<div class="abs" style="left:281.2px;top:681.1999999999999px;width:190px;height:0.4px;background:#fafafa;"></div>
<div class="abs" style="left:281.2px;top:684.0999999999999px;width:190px;height:0.4px;background:#fafafa;"></div>
<div class="abs" style="left:281.2px;top:687.0px;width:190px;height:0.4px;background:#fafafa;"></div>
<div class="abs" style="left:281.2px;top:689.9px;width:190px;height:0.4px;background:#fafafa;"></div>
<div class="abs" style="left:281.2px;top:692.8px;width:190px;height:0.4px;background:#fafafa;"></div>
<div class="abs" style="left:281.2px;top:695.6999999999999px;width:190px;height:0.4px;background:#fafafa;"></div>
<div class="abs" style="left:281.2px;top:698.5999999999999px;width:190px;height:0.4px;background:#fafafa;"></div>
<div class="abs" style="left:281.2px;top:701.5px;width:190px;height:0.4px;background:#fafafa;"></div>
<div class="abs" style="left:281.2px;top:704.4px;width:190px;height:0.4px;background:#fafafa;"></div>
<div class="abs" style="left:281.2px;top:707.3px;width:190px;height:0.4px;background:#fafafa;"></div>
<div class="abs" style="left:281.2px;top:710.1999999999999px;width:190px;height:0.4px;background:#fafafa;"></div>
<div class="abs" style="left:281.2px;top:649.2px;width:10px;height:3.4px;border:0.7px solid #6aa585"></div>
<div class="abs" style="left:471.5px;top:647px;width:3.5px;height:64px;background:#ededed;"></div>
<div class="abs" style="left:278px;top:711px;width:197px;height:5.2px;background:#e6e6e6;"></div>
<div class="abs" style="left:292.5px;top:711px;width:8.5px;height:4px;background:#fff;"></div>
<div class="abs" style="left:294.5px;top:713.6px;width:4.5px;height:1px;background:#217346;"></div>
<div class="abs" style="left:306px;top:712.6px;width:1.6px;height:1.6px;background:#c2c2c2;"></div>
<div class="abs" style="left:388px;top:712.6px;width:80px;height:2px;background:#dcdcdc;"></div>
<div class="abs" style="left:278px;top:716.2px;width:197px;height:2.8px;background:#f0f0f0;"></div>
<div class="abs" style="left:279px;top:717px;width:5px;height:1px;background:#b2b2b2;"></div>
<div class="abs" style="left:430px;top:716.8px;width:5px;height:1.6px;background:#bdbdbd;"></div>
<div class="abs" style="left:444px;top:717.2px;width:22px;height:0.8px;background:#b2b2b2;"></div>
</div></body></html>
